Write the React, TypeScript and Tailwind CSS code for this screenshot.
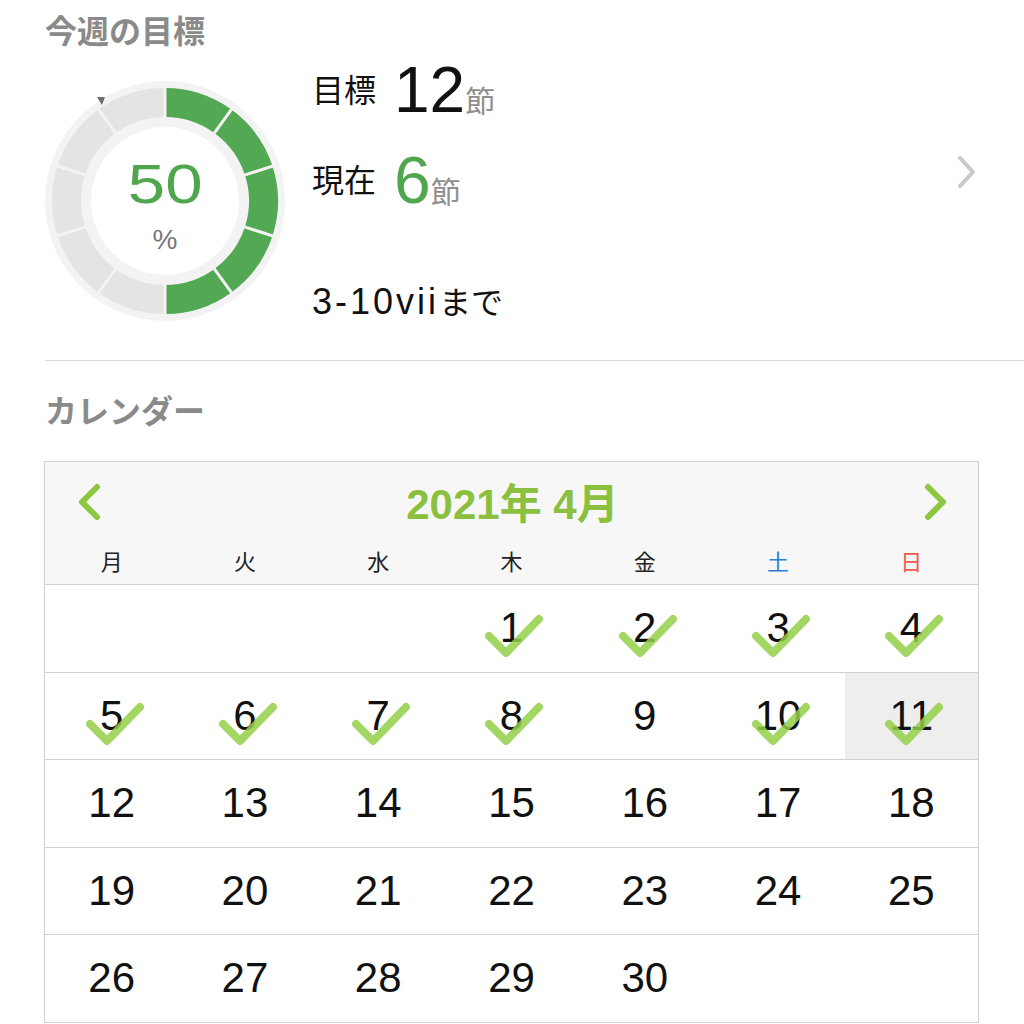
import React from 'react';

const GREEN = '#53a853';
const GRAY_SEG = '#e4e4e4';

function sectorPath(cx: number, cy: number, r1: number, r2: number, a0: number, a1: number) {
  // angles in degrees, 0 = 12 o'clock, clockwise
  const p = (r: number, a: number) => {
    const rad = ((a - 90) * Math.PI) / 180;
    return [cx + r * Math.cos(rad), cy + r * Math.sin(rad)];
  };
  const [x1, y1] = p(r2, a0);
  const [x2, y2] = p(r2, a1);
  const [x3, y3] = p(r1, a1);
  const [x4, y4] = p(r1, a0);
  return `M${x1} ${y1} A${r2} ${r2} 0 0 1 ${x2} ${y2} L${x3} ${y3} A${r1} ${r1} 0 0 0 ${x4} ${y4} Z`;
}

function Donut() {
  const c = 121;
  const segs = Array.from({ length: 10 }, (_, i) => i);
  return (
    <div className="relative w-[242px] h-[242px] shrink-0">
      <svg width="242" height="242" viewBox="0 0 242 242">
        <circle cx={c} cy={c} r={120} fill="#f3f3f3" />
        {segs.map((i) => (
          <path
            key={i}
            d={sectorPath(c, c, 84, 113, i * 36, (i + 1) * 36)}
            fill={i < 5 ? GREEN : GRAY_SEG}
          />
        ))}
        {segs.map((i) => {
          const rad = ((i * 36 - 90) * Math.PI) / 180;
          return (
            <line
              key={`l${i}`}
              x1={c + 82 * Math.cos(rad)}
              y1={c + 82 * Math.sin(rad)}
              x2={c + 115 * Math.cos(rad)}
              y2={c + 115 * Math.sin(rad)}
              stroke="#f3f3f3"
              strokeWidth="3"
            />
          );
        })}
        <circle cx={c} cy={c} r={74} fill="#ffffff" />
        <polygon points="53,17 61,17 58,25" fill="#6f6f6f" />
      </svg>
      <div className="absolute inset-0 flex flex-col items-center pt-[76px]">
        <div className="text-[56px] leading-[56px] text-[#4fa64f] scale-x-[1.2]">50</div>
        <div className="mt-[14px] text-[28px] leading-[28px] text-[#777777]">%</div>
      </div>
    </div>
  );
}

function Check() {
  return (
    <svg
      width="70"
      height="56"
      viewBox="0 0 70 56"
      className="absolute left-[calc(50%-35px)] top-[calc(50%-24px)] pointer-events-none"
    >
      <polyline
        points="13,32 30,49 63,15"
        fill="none"
        stroke="#93cf48"
        strokeOpacity="0.85"
        strokeWidth="8"
        strokeLinecap="round"
        strokeLinejoin="round"
      />
    </svg>
  );
}

const checked = new Set([1, 2, 3, 4, 5, 6, 7, 8, 10, 11]);
const today = 11;

export default function App() {
  // April 2021 starts on Thursday (Mon-first grid → 3 blanks)
  const cells: (number | null)[] = [null, null, null];
  for (let d = 1; d <= 30; d++) cells.push(d);
  while (cells.length % 7 !== 0) cells.push(null);
  const weeks: (number | null)[][] = [];
  for (let i = 0; i < cells.length; i += 7) weeks.push(cells.slice(i, i + 7));

  const weekdays = ['月', '火', '水', '木', '金', '土', '日'];

  return (
    <div className="w-[1024px] h-[1024px] overflow-hidden bg-white font-['Liberation_Sans','Noto_Sans_CJK_JP',sans-serif] text-[#111111]">
      {/* 今週の目標 */}
      <div className="ml-[45px] border-b border-[#dcdcdc]">
        <h2 className="pt-[12px] h-[52px] text-[32px] leading-[40px] font-bold text-[#8a8a8a]">
          今週の目標
        </h2>
        <div className="flex mt-[7px] pr-[46px]">
          <div className="mt-[21px] -ml-px">
            <Donut />
          </div>
          <div className="ml-[26px] flex-1 flex flex-col">
            <div className="flex items-center h-[64px]">
              <span className="text-[32px] leading-[40px]">目標</span>
              <div className="ml-[18px] flex items-baseline">
                <span className="text-[64px] leading-[64px]">12</span>
                <span className="text-[30px] text-[#8e8e8e]">節</span>
              </div>
            </div>
            <div className="flex items-center h-[64px] mt-[26px]">
              <span className="text-[32px] leading-[40px]">現在</span>
              <div className="ml-[18px] flex items-baseline">
                <span className="text-[66px] leading-[64px] text-[#4fa64f]">6</span>
                <span className="text-[30px] text-[#8e8e8e]">節</span>
              </div>
            </div>
            <div className="mt-[67px] h-[44px] flex items-baseline">
              <span className="text-[36px] leading-[44px] tracking-[3px]">3-10vii</span>
              <span className="text-[32px] leading-[44px]">まで</span>
            </div>
          </div>
          <svg width="22" height="36" viewBox="0 0 22 36" className="mt-[95px] shrink-0">
            <polyline
              points="4,4 17,18 4,32"
              fill="none"
              stroke="#c7c7cc"
              strokeWidth="4"
              strokeLinecap="round"
              strokeLinejoin="round"
            />
          </svg>
        </div>
        <div className="h-[36px]" />
      </div>

      {/* カレンダー */}
      <h2 className="ml-[45px] mt-[31px] h-[40px] text-[32px] leading-[40px] font-bold text-[#8a8a8a]">
        カレンダー
      </h2>

      <div className="ml-[44px] mt-[29px] w-[935px] border-x border-t border-[#d0d0d0]">
        <div className="h-[123px] bg-[#f7f7f7] border-b border-[#d0d0d0] pt-[14px]">
          <div className="h-[52px] flex items-center justify-between pl-[32px] pr-[30px]">
            <svg width="24" height="38" viewBox="0 0 24 38">
              <polyline
                points="20,4 5,19 20,34"
                fill="none"
                stroke="#8dc63f"
                strokeWidth="6"
                strokeLinecap="round"
                strokeLinejoin="round"
              />
            </svg>
            <div className="text-[42px] leading-[52px] font-bold text-[#8bc03f] pt-[6px]">2021年 4月</div>
            <svg width="24" height="38" viewBox="0 0 24 38">
              <polyline
                points="4,4 19,19 4,34"
                fill="none"
                stroke="#8dc63f"
                strokeWidth="6"
                strokeLinecap="round"
                strokeLinejoin="round"
              />
            </svg>
          </div>
          <div className="mt-[20px] h-[30px] grid grid-cols-7 text-center text-[22px] leading-[30px]">
            {weekdays.map((w, i) => (
              <div
                key={w}
                className={i === 5 ? 'text-[#2d7fd1]' : i === 6 ? 'text-[#ef5a4b]' : 'text-[#222222]'}
              >
                {w}
              </div>
            ))}
          </div>
        </div>

        {weeks.map((week, wi) => (
          <div key={wi} className="grid grid-cols-7 h-[87.5px] border-b border-[#d0d0d0]">
            {week.map((d, di) => (
              <div
                key={di}
                className={`relative flex items-center justify-center ${d === today ? 'bg-[#eeeeee]' : ''}`}
              >
                {d !== null && <span className="text-[42px] leading-[42px]">{d}</span>}
                {d !== null && checked.has(d) && <Check />}
              </div>
            ))}
          </div>
        ))}
      </div>
    </div>
  );
}
